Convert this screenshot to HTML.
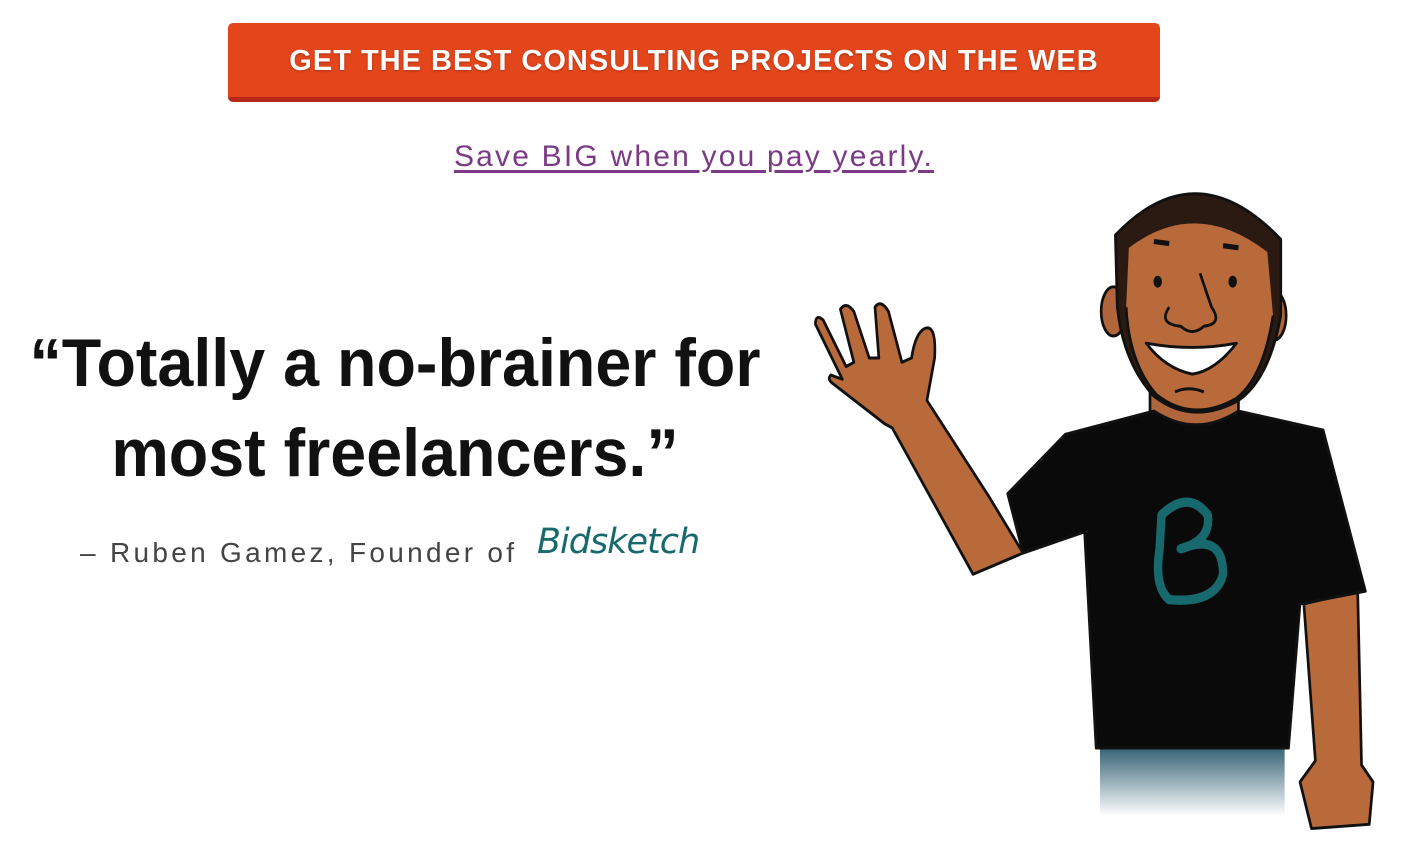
<!DOCTYPE html>
<html><head><meta charset="utf-8"><style>
body{margin:0;width:1420px;height:850px;background:#fff;position:relative;overflow:hidden;font-family:"Liberation Sans",sans-serif}
.btn{position:absolute;left:228px;top:23px;width:932px;height:74px;background:#e4461c;border-bottom:5px solid #b8281a;border-radius:5px;color:#fff;font-weight:bold;font-size:29px;text-align:center;line-height:76px;letter-spacing:1px;text-shadow:0 1px 2px rgba(0,0,0,.25)}
.link{position:absolute;left:0;width:1388px;top:140px;text-align:center;font-size:30px;color:#7b3a85;text-decoration:underline;text-underline-offset:4px;letter-spacing:2.2px}
.q{position:absolute;left:395px;font-weight:bold;font-size:68px;color:#111;white-space:nowrap;transform:translateX(-50%) scaleX(0.95);transform-origin:center;letter-spacing:0px}
.attr{position:absolute;left:80px;top:537px;font-size:28px;color:#444;white-space:nowrap;letter-spacing:3.3px}
.bid{position:absolute;left:537px;top:522px;font-size:35px;color:#17696d;font-style:italic;font-family:"DejaVu Sans",sans-serif;letter-spacing:-1px}
</style></head><body>
<div class="btn">GET THE BEST CONSULTING PROJECTS ON THE WEB</div>
<div class="link">Save BIG when you pay yearly.</div>
<div class="q" style="top:324px">“Totally a no-brainer for</div>
<div class="q" style="top:414px">most freelancers.”</div>
<div class="attr">– Ruben Gamez, Founder of</div>
<div class="bid">Bidsketch</div>
<svg style="position:absolute;left:800px;top:180px" width="600" height="660" viewBox="0 0 1560 1557" preserveAspectRatio="none">
<defs><linearGradient id="j" x1="0" y1="0" x2="0" y2="1"><stop offset="0" stop-color="#1d4f63"/><stop offset="1" stop-color="#1d4f63" stop-opacity="0"/></linearGradient></defs>
<g stroke="#111" stroke-width="7" stroke-linejoin="round">
<rect x="780" y="1320" width="480" height="180" fill="url(#j)" stroke="none"/>
<path d="M1310 1000 L1450 970 L1460 1380 L1490 1420 L1480 1520 L1330 1530 L1300 1420 L1340 1370 Z" fill="#b86a3a"/>
<path d="M490 745 L330 520 L350 420 Q355 340 325 350 Q300 360 290 420 L265 430 L230 310 Q210 280 195 300 L205 420 L180 420 L140 310 Q120 285 105 305 L140 430 L120 440 L60 330 Q40 315 40 340 L110 470 L80 460 Q70 470 85 480 L220 575 L240 585 L450 930 L580 880 Z" fill="#b86a3a"/>
<rect x="910" y="470" width="230" height="130" fill="#b0663a"/>
<path d="M540 740 L690 600 L920 545 Q1030 610 1140 545 L1360 590 L1470 970 L1300 1000 L1270 1340 L770 1340 L740 830 L580 880 Z" fill="#0a0a0a"/>
<ellipse cx="815" cy="310" rx="32" ry="58" fill="#b0663a"/>
<ellipse cx="1232" cy="320" rx="32" ry="58" fill="#b0663a"/>
<path d="M820 130 Q1030 -70 1250 140 L1250 320 Q1220 470 1140 520 Q1020 580 920 510 Q840 430 825 300 Z" fill="#2a1a12"/>
<path d="M855 160 Q1030 40 1215 170 L1230 320 Q1205 465 1135 515 Q1020 575 925 505 Q855 430 848 300 Z" fill="#b86a3a" stroke="none"/>
<path d="M848 300 Q855 430 925 505 Q1020 575 1135 515 Q1205 465 1230 320" fill="none"/>
<path d="M900 385 Q1020 405 1135 385 Q1080 450 1020 458 Q950 445 900 385 Z" fill="#fff"/>
<path d="M960 300 Q930 340 990 345 Q1020 370 1050 345 Q1100 340 1070 300 L1040 220" fill="none"/>
<path d="M975 500 Q1010 485 1050 500" fill="none"/>
<path d="M920 145 L960 150 M1100 155 L1140 160" fill="none" stroke-width="12"/>
</g>
<ellipse cx="930" cy="240" rx="11" ry="14" fill="#111"/>
<ellipse cx="1125" cy="240" rx="11" ry="14" fill="#111"/>
<path d="M940 790 Q1010 730 1060 790 Q1070 850 990 870 Q1100 830 1100 930 Q1080 1000 960 990 Q920 960 935 870 Z" fill="none" stroke="#17696d" stroke-width="22" stroke-linejoin="round"/>
</svg>
</body></html>
